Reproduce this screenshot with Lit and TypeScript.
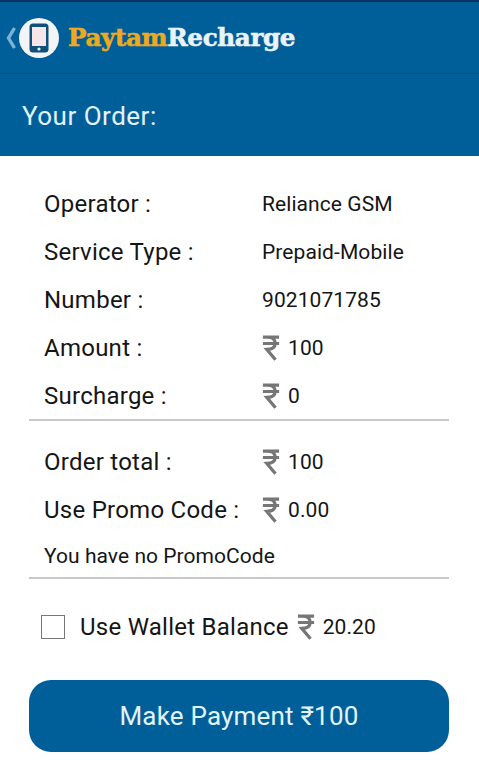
import { LitElement, html, css } from "lit";
import { customElement } from "lit/decorators.js";

const rupee = html`<svg class="rupee" viewBox="0 0 20 30" aria-hidden="true">
  <path d="M1 3h18M1 10h18M6 3c5.6 0 8.6 2.6 8.6 6.6 0 4.4-3.4 6.8-9.2 7l9.6 11.4" fill="none" stroke="#767676" stroke-width="3.6"/>
</svg>`;

@customElement("app-root")
export class AppRoot extends LitElement {
  static styles = css`
    :host {
      display: block;
      width: 479px;
      height: 763px;
      overflow: hidden;
      background: #fff;
      font-family: Roboto, "Liberation Sans", sans-serif;
      color: #151515;
    }
    .top {
      height: 71px;
      background: #005f99;
      border-top: 2px solid #0b3560;
      border-bottom: 1px solid #0a4f82;
      display: flex;
      align-items: center;
      padding-left: 5px;
    }
    .back { flex: none; }
    .disc {
      width: 40px;
      height: 40px;
      border-radius: 50%;
      background: #f2f4f6;
      display: flex;
      align-items: center;
      justify-content: center;
      margin-left: 2px;
      flex: none;
    }
    .logo {
      margin-left: 9px;
      font-family: "DejaVu Serif", serif;
      font-weight: 700;
      font-size: 24.6px;
      letter-spacing: -0.35px;
      line-height: 1;
      color: #eaf3f8;
      white-space: nowrap;
      -webkit-text-stroke: 0.6px currentColor;
      position: relative;
      top: 1px;
    }
    .logo b { color: #eda91f; font-weight: 700; }
    .title {
      height: 82px;
      box-sizing: border-box;
      padding: 2px 0 0 22px;
      background: #005f99;
      color: #e2f4fb;
      font-size: 26px;
      letter-spacing: 0.5px;
      display: flex;
      align-items: center;
    }
    .rows { padding: 24px 30px 0 29px; }
    .row {
      height: 48px;
      display: flex;
      align-items: center;
      padding-left: 15px;
    }
    .label {
      width: 218px;
      flex: none;
      font-size: 24px;
      letter-spacing: 0.25px;
      white-space: nowrap;
    }
    .value {
      display: flex;
      align-items: center;
      font-size: 21px;
      letter-spacing: 0.08px;
      white-space: nowrap;
    }
    .rupee { width: 18px; height: 28px; margin-right: 8px; flex: none; }
    hr {
      border: 0;
      height: 2px;
      background: #c8c8c8;
      margin: -1px 0 0;
    }
    .sep1 { margin-bottom: 17px; }
    .note {
      height: 44px;
      display: flex;
      align-items: center;
      padding-left: 15px;
      font-size: 21px;
      letter-spacing: 0.05px;
    }
    .wallet {
      height: 96px;
      display: flex;
      align-items: center;
      padding-left: 12px;
    }
    .box {
      width: 22px;
      height: 22px;
      border: 1px solid #777;
      background: #fff;
      flex: none;
      margin-right: 15px;
    }
    .wallet .label { width: auto; margin-right: 8px; }
    .pay {
      display: block;
      box-sizing: border-box;
      width: 420px;
      height: 72px;
      margin: 5px 0 0;
      border: 0;
      border-radius: 22px;
      background: #005f99;
      color: #e2f4fb;
      font: 400 26px Roboto, "Liberation Sans", sans-serif;
      letter-spacing: 0.2px;
      text-align: center;
    }
  `;

  row(label: string, value: string, money = false) {
    return html`<div class="row">
      <span class="label">${label}</span>
      <span class="value">${money ? rupee : ""}${value}</span>
    </div>`;
  }

  render() {
    return html`
      <header class="top">
        <svg class="back" width="12" height="24" viewBox="0 0 12 24" aria-hidden="true">
          <path d="M9.5 2 3.5 12l6 10" fill="none" stroke="#7cb2d6" stroke-width="3.4"/>
        </svg>
        <span class="disc">
          <svg width="20" height="30" viewBox="0 0 20 30" aria-hidden="true">
            <rect x="0.5" y="0.5" width="19" height="29" rx="3.5" fill="#0f4f7c"/>
            <rect x="3" y="4" width="14" height="19" fill="#f6e6e8"/>
            <circle cx="10" cy="26" r="1.6" fill="#f2f4f6"/>
          </svg>
        </span>
        <span class="logo"><b>Paytam</b>Recharge</span>
      </header>
      <div class="title">Your Order:</div>
      <main class="rows">
        ${this.row("Operator :", "Reliance GSM")}
        ${this.row("Service Type :", "Prepaid-Mobile")}
        ${this.row("Number :", "9021071785")}
        ${this.row("Amount :", "100", true)}
        ${this.row("Surcharge :", "0", true)}
        <hr class="sep1" />
        ${this.row("Order total :", "100", true)}
        ${this.row("Use Promo Code :", "0.00", true)}
        <div class="note">You have no PromoCode</div>
        <hr />
        <div class="wallet">
          <span class="box"></span>
          <span class="label">Use Wallet Balance</span>
          <span class="value">${rupee}20.20</span>
        </div>
        <button class="pay">Make Payment ₹100</button>
      </main>
    `;
  }
}
